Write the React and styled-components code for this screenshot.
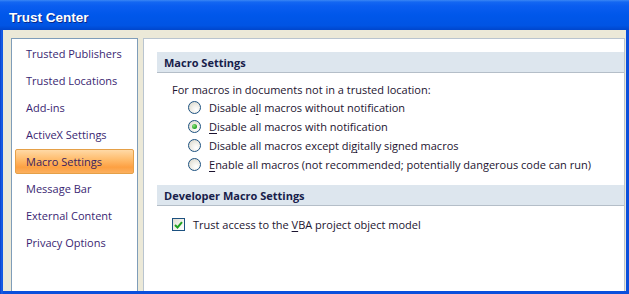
import styled, { createGlobalStyle } from 'styled-components';

const GlobalStyle = createGlobalStyle`
  html, body { margin: 0; padding: 0; background: #ece9d8; }
  body { font-family: 'Open Sans', 'Noto Sans', sans-serif; }
`;

const Window = styled.div`
  width: 629px;
  height: 294px;
  box-sizing: border-box;
  display: flex;
  flex-direction: column;
  background: #0a4fdc;
  overflow: hidden;
`;

const TitleBar = styled.div`
  height: 30px;
  flex: none;
  display: flex;
  align-items: center;
  padding-left: 9px;
  padding-top: 4px;
  box-sizing: border-box;
  background: linear-gradient(to bottom, #3a86f4 0, #1467f2 2px, #0a5df0 6px, #0057ea 50%, #0054e4 85%, #0046cc 100%);
  color: #fff;
  font-family: 'Liberation Sans', 'DejaVu Sans', sans-serif;
  font-weight: 700;
  font-size: 13.5px;
  text-shadow: 1px 1px 0 #0a2a8a;
`;

const Frame = styled.div`
  flex: 1;
  display: flex;
  padding: 0 3px 3px 3px;
  min-height: 0;
  background: linear-gradient(to right, #0a3fc8 0, #1a64ec 2px, #0a4fdc 3px);
`;

const Body = styled.div`
  flex: 1;
  display: grid;
  grid-template-columns: 127px 1fr;
  column-gap: 5px;
  padding: 8px 1px 0 8px;
  background: #ece9d8;
  min-height: 0;
`;

const Nav = styled.div`
  background: #fff;
  border: 1px solid #7f9db9;
  border-bottom: none;
  padding-top: 1px;
  display: flex;
  flex-direction: column;
`;

const NavItem = styled.div`
  height: 25px;
  line-height: 23px;
  margin: 1px 3px;
  padding-left: 10px;
  font-size: 11px;
  color: ${p => (p.$active ? '#3b1d5e' : '#3a1f72')};
  border-radius: 2px;
  box-sizing: border-box;
  border: 1px solid ${p => (p.$active ? '#e5a048' : 'transparent')};
  background: ${p => (p.$active ? 'linear-gradient(to bottom, #ffd9a6 0%, #ffbd6e 40%, #fda042 75%, #fbb060 100%)' : 'transparent')};
`;

const Main = styled.div`
  background: #fff;
  border: 1px solid #b9c4cf;
  border-bottom: none;
  padding: 13px 0 0 13px;
`;

const SectionHeader = styled.div`
  height: 21px;
  box-sizing: border-box;
  display: flex;
  align-items: center;
  padding-left: 7px;
  background: #dde6ee;
  border-bottom: 1px solid #b4bec8;
  font-size: 11px;
  font-weight: 700;
  color: #17204a;
  margin-top: ${p => p.$gap || 0}px;
`;

const Group = styled.div`
  padding-left: 15px;
  padding-top: ${p => p.$top || 0}px;
  font-size: 11px;
  color: #1c1430;
`;

const Line = styled.div`
  height: 16px;
  line-height: 16px;
`;

const OptionRow = styled.label`
  display: flex;
  align-items: center;
  gap: 8px;
  height: 19px;
  padding-left: ${p => p.$indent || 0}px;
`;

const Radio = styled.span`
  width: 13px;
  height: 13px;
  box-sizing: border-box;
  border-radius: 50%;
  border: 1px solid #1c5180;
  background: radial-gradient(circle at 65% 70%, #ffffff 0%, #f1f0ea 40%, #d6d3c6 100%);
  display: flex;
  align-items: center;
  justify-content: center;
  flex: none;

  &::after {
    content: '';
    width: 5px;
    height: 5px;
    border-radius: 50%;
    background: radial-gradient(circle at 35% 35%, #8be07a, #21a121 70%);
    display: ${p => (p.$checked ? 'block' : 'none')};
  }
`;

const Checkbox = styled.span`
  width: 13px;
  height: 13px;
  box-sizing: border-box;
  border: 1px solid #1c5180;
  background: linear-gradient(135deg, #e0ddd2 0%, #f6f5f0 60%, #ffffff 100%);
  display: flex;
  align-items: center;
  justify-content: center;
  flex: none;
`;

const Key = styled.span`
  text-decoration: underline;
  text-underline-offset: 2px;
`;

const options = [
  { text: <>Disable a<Key>l</Key>l macros without notification</>, checked: false },
  { text: <><Key>D</Key>isable all macros with notification</>, checked: true },
  { text: <>Disable all macros except di<Key>g</Key>itally signed macros</>, checked: false },
  { text: <><Key>E</Key>nable all macros (not recommended; potentially dangerous code can run)</>, checked: false },
];

const navItems = [
  'Trusted Publishers',
  'Trusted Locations',
  'Add-ins',
  'ActiveX Settings',
  'Macro Settings',
  'Message Bar',
  'External Content',
  'Privacy Options',
];

export default function App() {
  return (
    <>
      <GlobalStyle />
      <Window>
        <TitleBar>Trust Center</TitleBar>
        <Frame>
          <Body>
            <Nav>
              {navItems.map(item => (
                <NavItem key={item} $active={item === 'Macro Settings'}>{item}</NavItem>
              ))}
            </Nav>
            <Main>
              <SectionHeader>Macro Settings</SectionHeader>
              <Group $top={9}>
                <Line>For macros in documents not in a trusted location:</Line>
                {options.map((o, i) => (
                  <OptionRow key={i} $indent={16}>
                    <Radio $checked={o.checked} />
                    <span>{o.text}</span>
                  </OptionRow>
                ))}
              </Group>
              <SectionHeader $gap={11}>Developer Macro Settings</SectionHeader>
              <Group $top={9}>
                <OptionRow>
                  <Checkbox>
                    <svg width="9" height="8" viewBox="0 0 9 8">
                      <path d="M1 4 L3.5 6.5 L8 1.2" fill="none" stroke="#21a121" strokeWidth="2" />
                    </svg>
                  </Checkbox>
                  <span>Trust access to the <Key>V</Key>BA project object model</span>
                </OptionRow>
              </Group>
            </Main>
          </Body>
        </Frame>
      </Window>
    </>
  );
}
